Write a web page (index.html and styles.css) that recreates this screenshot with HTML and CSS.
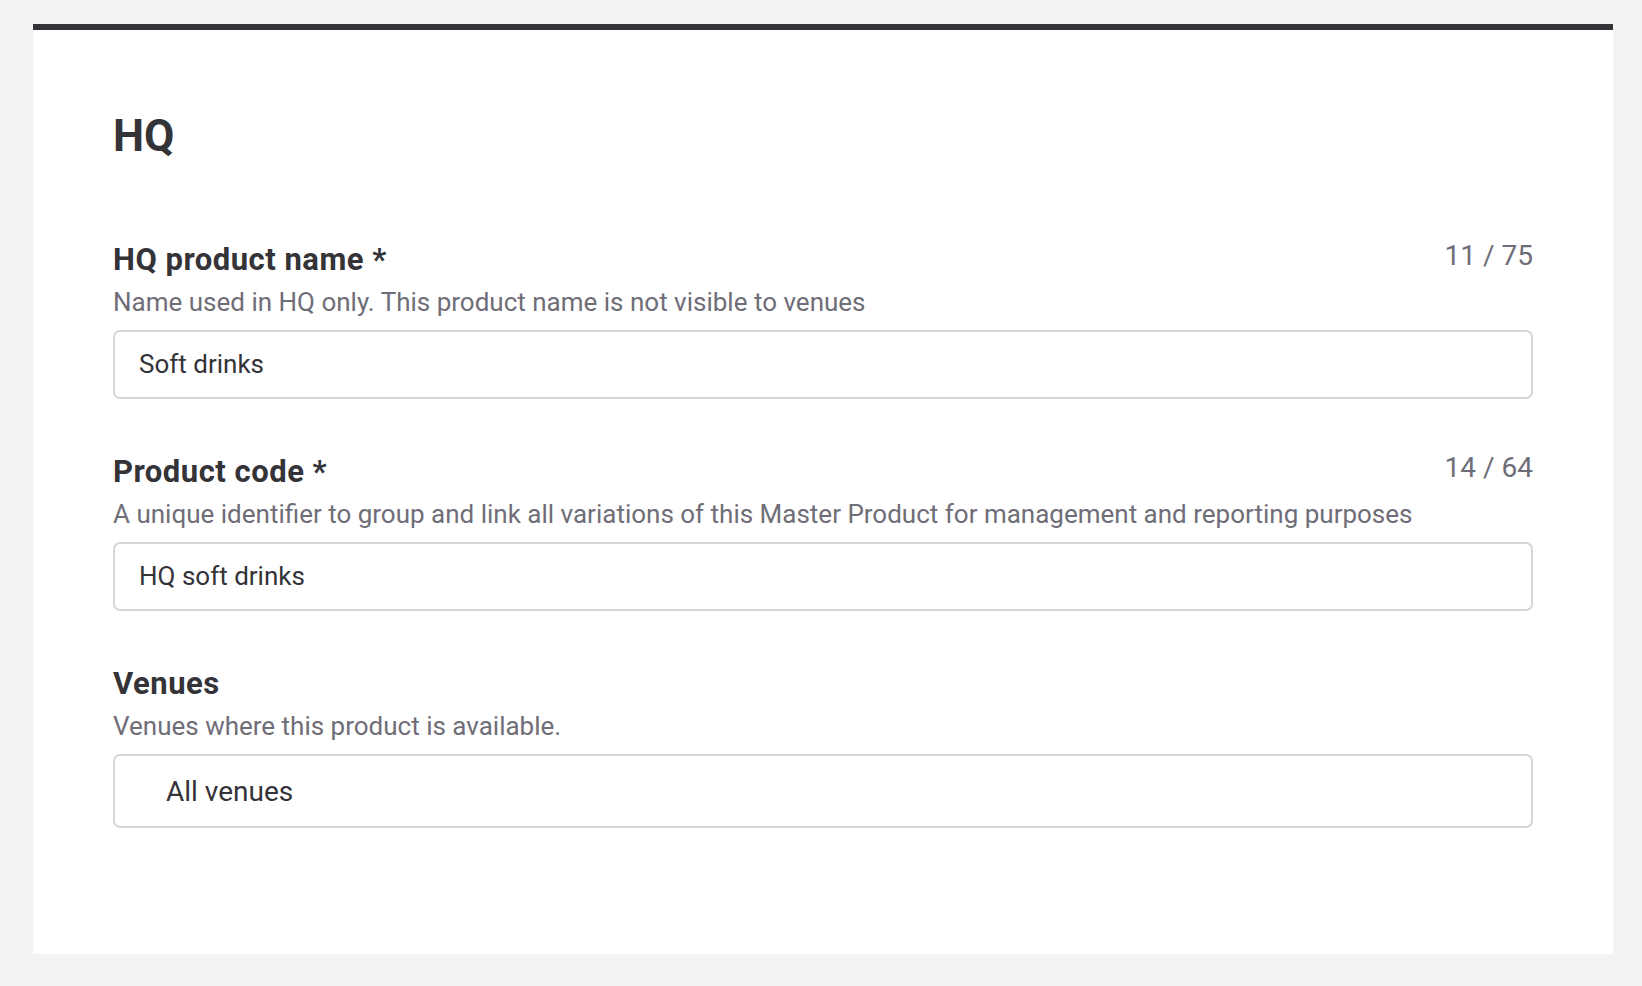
FILE: index.html
```html
<!DOCTYPE html>
<html lang="en">
<head>
<meta charset="utf-8">
<title>HQ</title>
<link rel="stylesheet" href="styles.css">
</head>
<body>
<main class="card">
  <h1 class="title">HQ</h1>
  <div class="fields">
    <section class="field">
      <div class="field-head">
        <label class="field-label" for="name">HQ product name *</label>
        <span class="counter">11 / 75</span>
      </div>
      <p class="field-desc">Name used in HQ only. This product name is not visible to venues</p>
      <div class="input" id="name">Soft drinks</div>
    </section>
    <section class="field">
      <div class="field-head">
        <label class="field-label" for="code">Product code *</label>
        <span class="counter">14 / 64</span>
      </div>
      <p class="field-desc">A unique identifier to group and link all variations of this Master Product for management and reporting purposes</p>
      <div class="input" id="code">HQ soft drinks</div>
    </section>
    <section class="field">
      <div class="field-head">
        <label class="field-label" for="venues">Venues</label>
      </div>
      <p class="field-desc">Venues where this product is available.</p>
      <div class="input input-select" id="venues">All venues</div>
    </section>
  </div>
</main>
</body>
</html>
```
FILE: styles.css
```css
* { box-sizing: border-box; }

html, body {
  margin: 0;
  padding: 0;
}

body {
  background: #f3f3f3;
  font-family: Roboto, "Liberation Sans", Arial, sans-serif;
  color: #333338;
  width: 1642px;
  height: 986px;
  overflow: hidden;
}

.card {
  display: flex;
  flex-direction: column;
  margin: 24px 29px 0 33px;
  width: 1580px;
  height: 930px;
  background: #ffffff;
  border-top: 6px solid #343338;
  padding: 79px 80px 0 80px;
}

.title {
  margin: 0;
  font-size: 44px;
  line-height: 54px;
  font-weight: 700;
  color: #333338;
}

.fields {
  display: flex;
  flex-direction: column;
  gap: 55px;
  margin-top: 79px;
}

.field {
  display: flex;
  flex-direction: column;
}

.field-head {
  display: flex;
  justify-content: space-between;
  align-items: flex-start;
  height: 36px;
}

.field-label {
  font-size: 31px;
  line-height: 36px;
  font-weight: 700;
  letter-spacing: 0.5px;
  color: #333338;
}

.counter {
  font-size: 28px;
  line-height: 28px;
  color: #6f6e78;
}

.field-desc {
  margin: 8px 0 0 0;
  font-size: 26px;
  line-height: 32px;
  color: #6f6e78;
}

.input {
  margin-top: 12px;
  height: 69px;
  border: 2px solid #d6d6d6;
  border-radius: 7px;
  padding: 0 24px;
  font-size: 26px;
  line-height: 65px;
  color: #333338;
}

.input-select {
  height: 74px;
  padding-left: 51px;
  font-size: 28px;
  line-height: 72px;
}
```
